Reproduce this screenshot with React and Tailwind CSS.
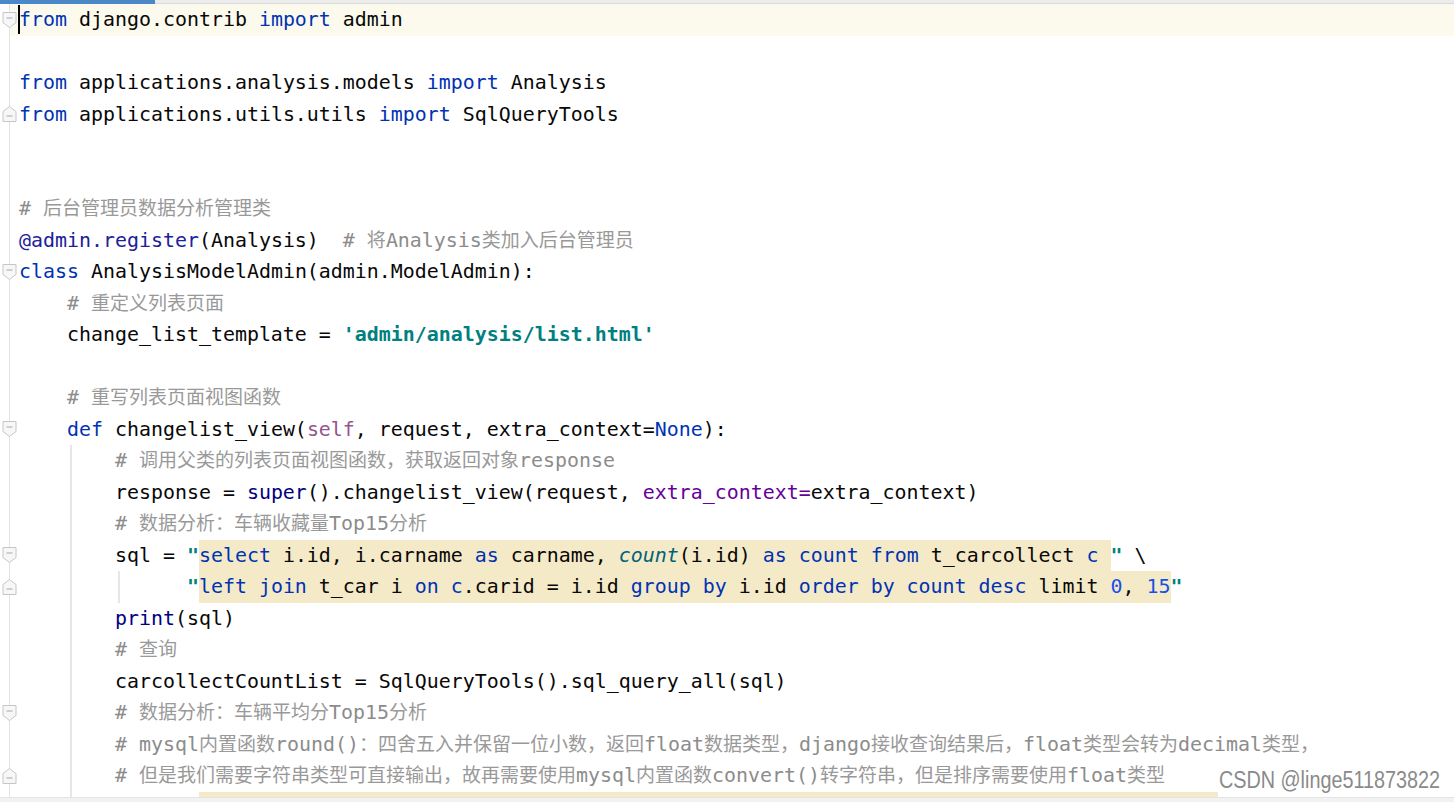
import React from "react";

const C = {
  "": "text-[#080808]",
  kw: "text-[#0033b3]",
  c: "text-[#8c8c8c]",
  dec: "text-[#20209a]",
  s: "text-[#008080] font-bold",
  self: "text-[#94558d]",
  kwa: "text-[#660099]",
  bi: "text-[#000080]",
  n: "text-[#1750eb]",
  fn: "text-[#00627a] italic",
};

const rows = [
  { fold: "start", cur: true, t: [["from", "kw"], [" django.contrib "], ["import", "kw"], [" admin"]] },
  { t: [] },
  { t: [["from", "kw"], [" applications.analysis.models "], ["import", "kw"], [" Analysis"]] },
  { fold: "end", t: [["from", "kw"], [" applications.utils.utils "], ["import", "kw"], [" SqlQueryTools"]] },
  { t: [] },
  { t: [] },
  { t: [["# 后台管理员数据分析管理类", "c"]] },
  { t: [["@admin.register", "dec"], ["(Analysis)  "], ["# 将Analysis类加入后台管理员", "c"]] },
  { fold: "start", t: [["class", "kw"], [" AnalysisModelAdmin(admin.ModelAdmin):"]] },
  { t: [["    "], ["# 重定义列表页面", "c"]] },
  { t: [["    change_list_template = "], ["'admin/analysis/list.html'", "s"]] },
  { t: [] },
  { t: [["    "], ["# 重写列表页面视图函数", "c"]] },
  {
    fold: "start",
    t: [["    "], ["def", "kw"], [" changelist_view("], ["self", "self"], [", request, extra_context="], ["None", "kw"], ["):"]],
  },
  { g: [60], t: [["        "], ["# 调用父类的列表页面视图函数，获取返回对象response", "c"]] },
  {
    g: [60],
    t: [["        response = "], ["super", "bi"], ["().changelist_view(request, "], ["extra_context=", "kwa"], ["extra_context)"]],
  },
  { g: [60], t: [["        "], ["# 数据分析：车辆收藏量Top15分析", "c"]] },
  {
    fold: "start",
    g: [60],
    t: [
      ["        sql = "],
      ['"', "s"],
      {
        hl: [
          ["select", "kw"], [" i.id, i.carname "], ["as", "kw"], [" carname, "], ["count", "fn"], ["(i.id) "],
          ["as", "kw"], [" "], ["count", "kw"], [" "], ["from", "kw"], [" t_carcollect "], ["c", "kw"], [" "],
        ],
      },
      ['"', "s"],
      [" \\"],
    ],
  },
  {
    fold: "end",
    g: [60, 108],
    t: [
      ["              "],
      ['"', "s"],
      {
        hl: [
          ["left join", "kw"], [" t_car i "], ["on", "kw"], [" "], ["c", "kw"], [".carid = i.id "], ["group by", "kw"],
          [" i.id "], ["order by count desc", "kw"], [" limit "], ["0", "n"], [", "], ["15", "n"],
        ],
      },
      ['"', "s"],
    ],
  },
  { g: [60], t: [["        "], ["print", "bi"], ["(sql)"]] },
  { g: [60], t: [["        "], ["# 查询", "c"]] },
  { g: [60], t: [["        carcollectCountList = SqlQueryTools().sql_query_all(sql)"]] },
  { fold: "start", g: [60], t: [["        "], ["# 数据分析：车辆平均分Top15分析", "c"]] },
  {
    g: [60],
    t: [["        "], ["# mysql内置函数round()：四舍五入并保留一位小数，返回float数据类型，django接收查询结果后，float类型会转为decimal类型，", "c"]],
  },
  {
    fold: "end",
    g: [60],
    t: [["        "], ["# 但是我们需要字符串类型可直接输出，故再需要使用mysql内置函数convert()转字符串，但是排序需要使用float类型", "c"]],
  },
  { g: [60], t: [["               "], { hl: [[" ".repeat(85)]] }] },
];

// comments mix ascii and cjk, cjk glyphs are a bit smaller in the ide
const Tok = ({ text, cls = "" }) => {
  if (cls !== "c") return <span className={C[cls]}>{text}</span>;
  const parts = text.split(/([\u3000-\u9fff\uff00-\uffef]+)/);
  return (
    <span className={C.c}>
      {parts.map((p, i) =>
        i % 2 ? (
          <span key={i} className="text-[19px] text-[#999999]">
            {p}
          </span>
        ) : (
          p
        )
      )}
    </span>
  );
};

const Fold = ({ type }) => (
  <svg
    width="15"
    height="17"
    viewBox="0 0 15 17"
    className="absolute left-[2px] top-1/2 -translate-y-1/2 z-10 w-[15px] h-[17px] max-w-none"
  >
    {type === "start" ? (
      <>
        <path d="M1 1H14V11L7.5 16L1 11Z" fill="#f7f7f7" stroke="#c6c6c6" />
        <path d="M4.5 6.5H10.5" stroke="#a6a6a6" />
      </>
    ) : (
      <>
        <path d="M1 16H14V6L7.5 1L1 6Z" fill="#f7f7f7" stroke="#c6c6c6" />
        <path d="M4.5 10.5H10.5" stroke="#a6a6a6" />
      </>
    )}
  </svg>
);

const Line = ({ row }) => {
  // group plain tokens together so they share a baseline
  const groups = [];
  row.t.forEach((tok) => {
    if (!Array.isArray(tok)) {
      groups.push({ hl: true, toks: tok.hl });
    } else {
      const last = groups[groups.length - 1];
      if (last && !last.hl) last.toks.push(tok);
      else groups.push({ hl: false, toks: [tok] });
    }
  });

  return (
    <div className="flex h-[31.5px] shrink-0">
      <div className="relative w-[10px] h-full border-r border-[#e3e3e3] shrink-0">
        {row.fold && <Fold type={row.fold} />}
      </div>
      <div className={`relative flex-1 flex h-full pl-[9px] ${row.cur ? "bg-[#fcfaed]" : ""}`}>
        {row.cur && <div className="absolute left-[8px] top-[1px] w-[2px] h-[29px] bg-black" />}
        {(row.g || []).map((x) => (
          <div key={x} className="absolute top-0 h-full w-[2px] bg-[#e6e6e6]" style={{ left: x }} />
        ))}
        {groups.map((g, i) => (
          <span
            key={i}
            className={`block h-full leading-[31.5px] whitespace-pre ${g.hl ? "bg-[#f5eac7]" : ""}`}
          >
            {g.toks.map(([text, cls], j) => (
              <Tok key={j} text={text} cls={cls} />
            ))}
          </span>
        ))}
      </div>
    </div>
  );
}

export default function App() {
  return (
    <div className="relative flex flex-col h-[802px] w-full overflow-hidden bg-white">
      <div className="flex h-[4px] shrink-0 bg-[#ececec] border-b border-[#dadada]">
        <div className="w-[155px] h-[4px] bg-[#4a88c7]" />
      </div>
      <div
        className="flex-1 min-h-0 overflow-hidden flex flex-col text-[19.93px]"
        style={{ fontFamily: '"DejaVu Sans Mono", "Noto Sans CJK SC", monospace' }}
      >
        {rows.map((row, i) => (
          <Line key={i} row={row} />
        ))}
      </div>
      <div className="h-[5px] shrink-0 bg-[#f2f2f2] border-t border-[#e4e4e4]" />
      <div
        className="absolute right-[14px] bottom-[5px] bg-white pb-[5px] pt-[2px] leading-none text-[23px] text-[#8a8a8a] scale-x-[0.86] origin-bottom-right"
        style={{ fontFamily: '"Liberation Sans", sans-serif' }}
      >
        CSDN @linge511873822
      </div>
    </div>
  );
}
